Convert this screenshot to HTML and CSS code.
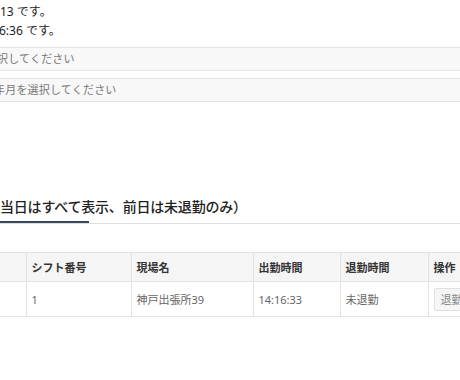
FILE: index.html
```html
<!DOCTYPE html>
<html lang="ja">
<head>
<meta charset="utf-8">
<link rel="stylesheet" href="styles.css">
</head>
<body>
<div class="page">
  <div class="info">
    <p class="line">13 です。</p>
    <p class="line line-cut">6:36 です。</p>
  </div>
  <div class="selects">
    <div class="select select-a">択してください</div>
    <div class="select select-b">年月を選択してください</div>
  </div>
  <div class="section-head">
    <h2 class="title">当日はすべて表示、前日は未退勤のみ）</h2>
    <div class="rule"><span class="rule-bar"></span></div>
  </div>
  <table class="grid">
    <colgroup>
      <col class="c1"><col class="c2"><col class="c3"><col class="c4"><col class="c5"><col class="c6">
    </colgroup>
    <thead>
      <tr><th></th><th>シフト番号</th><th>現場名</th><th>出勤時間</th><th>退勤時間</th><th>操作</th></tr>
    </thead>
    <tbody>
      <tr><td></td><td>1</td><td>神戸出張所39</td><td>14:16:33</td><td>未退勤</td><td><button class="btn">退勤する</button></td></tr>
    </tbody>
  </table>
</div>
</body>
</html>
```
FILE: styles.css
```css
html, body {
  margin: 0;
  padding: 0;
  background: #fff;
}
body {
  width: 460px;
  height: 380px;
  overflow: hidden;
  font-family: "Noto Sans", "Noto Sans CJK JP", sans-serif;
  color: #333;
}
.page {
  display: flex;
  flex-direction: column;
}
.info {
  padding-top: 2px;
}
.line {
  margin: 0;
  font-size: 12px;
  line-height: 19px;
  color: #222;
}
.line-cut {
  text-indent: -1px;
}
.selects {
  margin-top: 7px;
  display: flex;
  flex-direction: column;
  gap: 7px;
}
.select {
  box-sizing: border-box;
  height: 24px;
  width: 470px;
  background: #f8f8f8;
  border-top: 1px solid #e3e3e3;
  border-bottom: 1px solid #e3e3e3;
  font-size: 11px;
  line-height: 22px;
  color: #777;
  white-space: nowrap;
  overflow: hidden;
  letter-spacing: 0.2px;
}
.select-a { text-indent: -3px; }
.select-b { text-indent: -6px; }
.section-head {
  margin-top: 95px;
}
.title {
  margin: 0;
  font-size: 14px;
  font-weight: 500;
  line-height: 20px;
  color: #222;
  white-space: nowrap;
  letter-spacing: -0.2px;
}
.rule {
  margin-top: 4px;
  height: 2px;
  border-bottom: 1px solid #e0e0e0;
  display: flex;
}
.rule-bar {
  width: 89px;
  height: 2px;
  background: #34495e;
}
.grid {
  margin-top: 28px;
  border-collapse: collapse;
  table-layout: fixed;
  width: 500px;
  font-size: 11px;
}
.c1 { width: 26px; }
.c2 { width: 105px; }
.c3 { width: 122px; }
.c4 { width: 87px; }
.c5 { width: 88px; }
.c6 { width: 72px; }
.grid th, .grid td {
  border: 1px solid #e2e2e2;
  padding: 0 5px;
  text-align: left;
  white-space: nowrap;
  overflow: hidden;
}
.grid th:first-child, .grid td:first-child {
  border-left: none;
}
.grid th {
  height: 28px;
  background: #f5f5f5;
  color: #333;
  font-weight: 700;
}
.grid td {
  height: 34px;
  color: #666;
}
.btn {
  font-family: inherit;
  font-size: 11px;
  color: #888;
  background: #f5f5f5;
  border: 1px solid #e0e0e0;
  height: 23px;
  padding: 0 6px;
  border-radius: 2px;
}
```
